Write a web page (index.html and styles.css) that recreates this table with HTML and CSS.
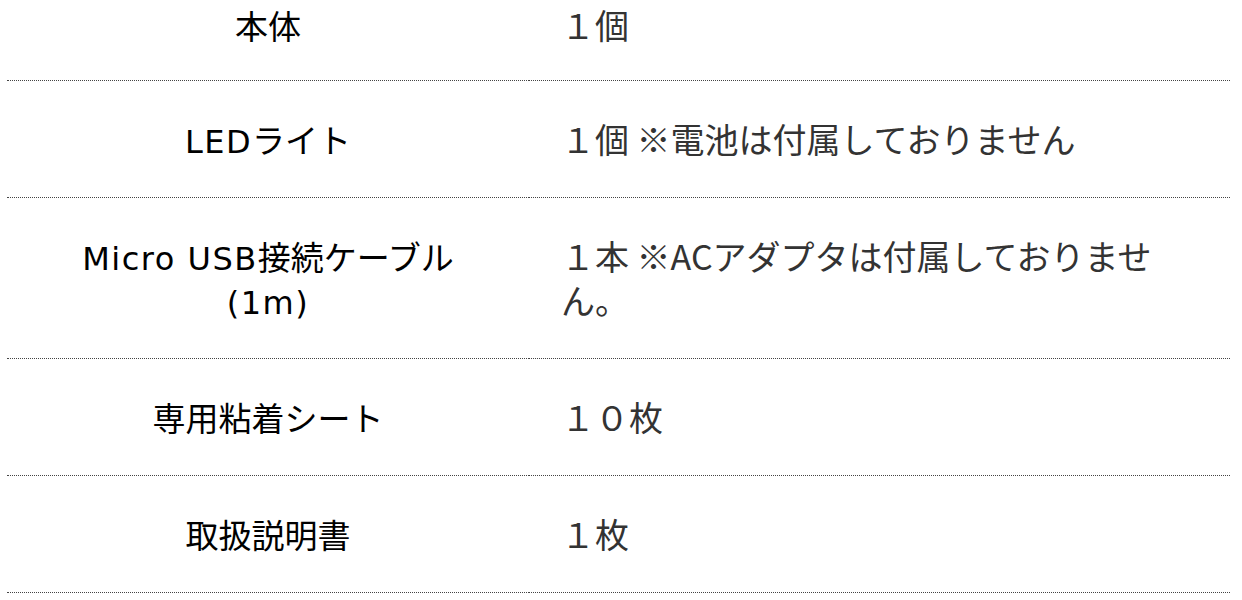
FILE: index.html
```html
<!DOCTYPE html>
<html lang="ja">
<head>
<meta charset="utf-8">
<link rel="stylesheet" href="styles.css">
</head>
<body>
<table class="spec">
  <tr class="first">
    <th>本体</th>
    <td>１個</td>
  </tr>
  <tr>
    <th><span class="lat">LED</span>ライト</th>
    <td>１個 ※電池は付属しておりません</td>
  </tr>
  <tr>
    <th><span class="lat">Micro USB</span>接続ケーブル<br><span class="lat">(1m)</span></th>
    <td>１本 ※ACアダプタは付属しておりません。</td>
  </tr>
  <tr>
    <th>専用粘着シート</th>
    <td>１０枚</td>
  </tr>
  <tr>
    <th>取扱説明書</th>
    <td>１枚</td>
  </tr>
</table>
</body>
</html>
```
FILE: styles.css
```css
html, body {
  margin: 0;
  padding: 0;
  background: #fff;
}
body {
  font-family: "Noto Sans CJK JP", "Noto Sans", sans-serif;
  overflow: hidden;
}
.spec {
  border-collapse: collapse;
  width: 1223px;
  margin: 0 0 0 7px;
}
.spec th,
.spec td {
  border-bottom: 1px dotted #444;
  padding: 36px 0;
  line-height: 44px;
  font-size: 33px;
  vertical-align: middle;
}
.spec .first th,
.spec .first td {
  padding-top: 3px;
  padding-bottom: 33px;
}
.spec th {
  width: 522px;
  text-align: center;
  font-weight: 400;
  color: #000;
}
.spec td {
  padding-left: 32px;
  padding-right: 60px;
  text-align: left;
  font-weight: 400;
  font-size: 34px;
  color: #333;
}
.lat {
  font-family: "DejaVu Sans", "Noto Sans CJK JP", sans-serif;
  font-size: 32px;
  line-height: 30px;
  letter-spacing: 1.5px;
}
```
